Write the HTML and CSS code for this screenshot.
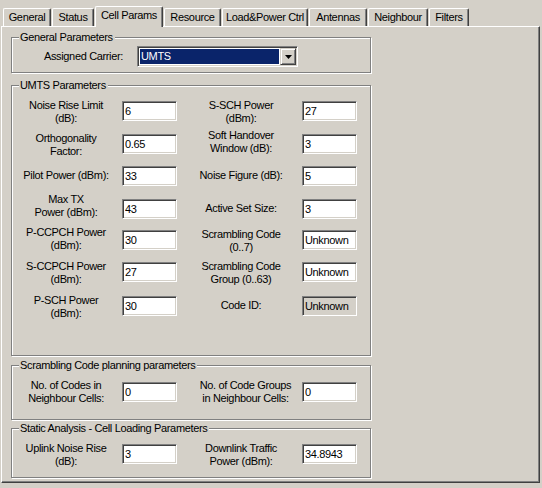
FILE: index.html
```html
<!DOCTYPE html>
<html>
<head>
<meta charset="utf-8">
<title>Cell Params</title>
<link rel="stylesheet" href="styles.css">
</head>
<body>
<div class="dialog">
  <div class="tabs">
    <div class="tab t-general">General</div>
    <div class="tab t-status">Status</div>
    <div class="tab t-cell active">Cell Params</div>
    <div class="tab t-resource">Resource</div>
    <div class="tab t-load">Load&amp;Power Ctrl</div>
    <div class="tab t-antennas">Antennas</div>
    <div class="tab t-neighbour">Neighbour</div>
    <div class="tab t-filters">Filters</div>
  </div>
  <div class="panel">
    <section class="group g-general">
      <div class="group-title">General Parameters</div>
      <div class="carrier-row">
        <label class="carrier-label">Assigned Carrier:</label>
        <div class="combo">
          <div class="combo-value">UMTS</div>
          <div class="combo-btn"><svg width="7" height="4" viewBox="0 0 7 4"><polygon points="0,0 7,0 3.5,4" fill="#000"/></svg></div>
        </div>
      </div>
    </section>

    <section class="group g-umts">
      <div class="group-title">UMTS Parameters</div>
      <div class="form-grid umts-grid">
        <div class="lbl lbl-l">Noise Rise Limit<br>(dB):</div>
        <input class="edit" type="text" value="6" readonly>
        <div class="lbl lbl-r">S-SCH Power<br>(dBm):</div>
        <input class="edit" type="text" value="27" readonly>

        <div class="lbl lbl-l">Orthogonality<br>Factor:</div>
        <input class="edit" type="text" value="0.65" readonly>
        <div class="lbl lbl-r up3">Soft Handover<br>Window (dB):</div>
        <input class="edit" type="text" value="3" readonly>

        <div class="lbl lbl-l one">Pilot Power (dBm):</div>
        <input class="edit" type="text" value="33" readonly>
        <div class="lbl lbl-r one">Noise Figure (dB):</div>
        <input class="edit" type="text" value="5" readonly>

        <div class="lbl lbl-l up4">Max TX<br>Power (dBm):</div>
        <input class="edit" type="text" value="43" readonly>
        <div class="lbl lbl-r one">Active Set Size:</div>
        <input class="edit" type="text" value="3" readonly>

        <div class="lbl lbl-l up2">P-CCPCH Power<br>(dBm):</div>
        <input class="edit" type="text" value="30" readonly>
        <div class="lbl lbl-r">Scrambling Code<br>(0..7)</div>
        <input class="edit" type="text" value="Unknown" readonly>

        <div class="lbl lbl-l">S-CCPCH Power<br>(dBm):</div>
        <input class="edit" type="text" value="27" readonly>
        <div class="lbl lbl-r">Scrambling Code<br>Group (0..63)</div>
        <input class="edit" type="text" value="Unknown" readonly>

        <div class="lbl lbl-l">P-SCH Power<br>(dBm):</div>
        <input class="edit" type="text" value="30" readonly>
        <div class="lbl lbl-r one">Code ID:</div>
        <input class="edit disabled" type="text" value="Unknown" readonly disabled>
      </div>
    </section>

    <section class="group g-scrambling">
      <div class="group-title">Scrambling Code planning parameters</div>
      <div class="form-grid single-row">
        <div class="lbl lbl-l up1">No. of Codes in<br>Neighbour Cells:</div>
        <input class="edit" type="text" value="0" readonly>
        <div class="lbl lbl-r shifted up1">No. of Code Groups<br>in Neighbour Cells:</div>
        <input class="edit" type="text" value="0" readonly>
      </div>
    </section>

    <section class="group g-static">
      <div class="group-title">Static Analysis - Cell Loading Parameters</div>
      <div class="form-grid single-row">
        <div class="lbl lbl-l">Uplink Noise Rise<br>(dB):</div>
        <input class="edit" type="text" value="3" readonly>
        <div class="lbl lbl-r">Downlink Traffic<br>Power (dBm):</div>
        <input class="edit" type="text" value="34.8943" readonly>
      </div>
    </section>
  </div>
</div>
</body>
</html>
```

FILE: styles.css
```css
* {
  box-sizing: border-box;
}

html,
body {
  margin: 0;
  padding: 0;
}

body {
  background: #d4d0c8;
  color: #000;
  font-family: "Liberation Sans", Arial, sans-serif;
  font-size: 11px;
  line-height: 13px;
  letter-spacing: -0.35px;
}

.dialog {
  width: 542px;
  height: 488px;
  overflow: hidden;
}

/* ---------- tabs ---------- */
.tabs {
  display: flex;
  align-items: flex-end;
  height: 26px;
  padding-left: 3px;
}

.tab {
  height: 18px;
  margin-right: 1px;
  padding-top: 2px;
  text-align: center;
  white-space: nowrap;
  background: #d4d0c8;
  border-top: 1px solid #fff;
  border-left: 1px solid #fff;
  border-right: 1px solid #404040;
  border-radius: 2px 2px 0 0;
  box-shadow: inset -1px 0 0 #808080;
}

.tab.active {
  height: 21px;
  margin-bottom: -1px;
  position: relative;
  z-index: 1;
}

.t-general { width: 48px; }
.t-status { width: 42px; }
.t-cell { width: 68px; }
.t-resource { width: 57px; }
.t-load { width: 86px; }
.t-antennas { width: 58px; }
.t-neighbour { width: 60px; }
.t-filters { width: 40px; }

/* ---------- panel ---------- */
.panel {
  margin-left: 1px;
  width: 539px;
  height: 457px;
  border: 1px solid;
  border-color: #fff #404040 #404040 #fff;
  box-shadow: inset -1px -1px 0 #808080;
  padding: 10px 0 0 9px;
}

/* ---------- group boxes ---------- */
.group {
  width: 360px;
  border: 1px solid #808080;
  box-shadow: inset 1px 1px 0 #fff, 1px 1px 0 #fff;
}

.group-title {
  display: table;
  margin: -7px 0 0 7px;
  padding: 0 2px 0 1px;
  background: #d4d0c8;
  white-space: nowrap;
}

.g-general {
  padding-bottom: 5px;
}

.g-umts {
  margin-top: 12px;
}

.g-scrambling {
  margin-top: 9px;
  padding-bottom: 14px;
}

.g-static {
  margin-top: 8px;
  padding-bottom: 9px;
}

/* ---------- combo ---------- */
.carrier-row {
  display: flex;
  align-items: center;
  margin-top: 2px;
}

.carrier-label {
  width: 111px;
  margin-right: 14px;
  text-align: right;
  white-space: nowrap;
}

.combo {
  display: flex;
  width: 161px;
  height: 21px;
  padding: 1px;
  background: #fff;
  border: 1px solid;
  border-color: #808080 #fff #fff #808080;
  box-shadow: inset 1px 1px 0 #404040, inset -1px -1px 0 #d4d0c8;
}

.combo-value {
  flex: 1;
  margin: 1px;
  padding-left: 1px;
  background: #0a246a;
  color: #fff;
  line-height: 15px;
}

.combo-btn {
  width: 16px;
  display: flex;
  align-items: center;
  justify-content: center;
  background: #d4d0c8;
  border: 1px solid;
  border-color: #d4d0c8 #404040 #404040 #d4d0c8;
  box-shadow: inset 1px 1px 0 #fff, inset -1px -1px 0 #808080;
}

.combo-btn svg {
  display: block;
}

/* ---------- form grids ---------- */
.form-grid {
  display: grid;
  grid-template-columns: 104px 55px 125px 55px;
  align-items: start;
  padding-left: 6px;
}

.umts-grid {
  grid-template-rows: 33px 32px 33px 31px 32px 34px 20px;
  margin-top: 9px;
  padding-bottom: 39px;
}

.g-scrambling .single-row {
  margin-top: 10px;
}

.g-static .single-row {
  margin-top: 9px;
}

.lbl {
  text-align: center;
  white-space: nowrap;
  line-height: 13px;
  margin-top: -2px;
}

.lbl-l {
  padding-right: 8px;
}

.lbl-r {
  padding-left: 3px;
}

.lbl-r.shifted {
  padding-left: 12px;
}

.lbl.one { margin-top: 3px; }
.lbl.up1 { margin-top: -3px; }
.lbl.up2 { margin-top: -4px; }
.lbl.up3 { margin-top: -5px; }
.lbl.up4 { margin-top: -6px; }

/* ---------- edit boxes ---------- */
.edit {
  display: block;
  width: 55px;
  height: 20px;
  margin: 0;
  padding: 0 0 0 2px;
  font: inherit;
  letter-spacing: inherit;
  line-height: 16px;
  color: #000;
  background: #fff;
  border: 1px solid;
  border-color: #808080 #fff #fff #808080;
  box-shadow: inset 1px 1px 0 #404040, inset -1px -1px 0 #d4d0c8;
  outline: none;
  border-radius: 0;
}

.edit.disabled {
  background: #d4d0c8;
  color: #000;
  -webkit-text-fill-color: #000;
  opacity: 1;
}
```
